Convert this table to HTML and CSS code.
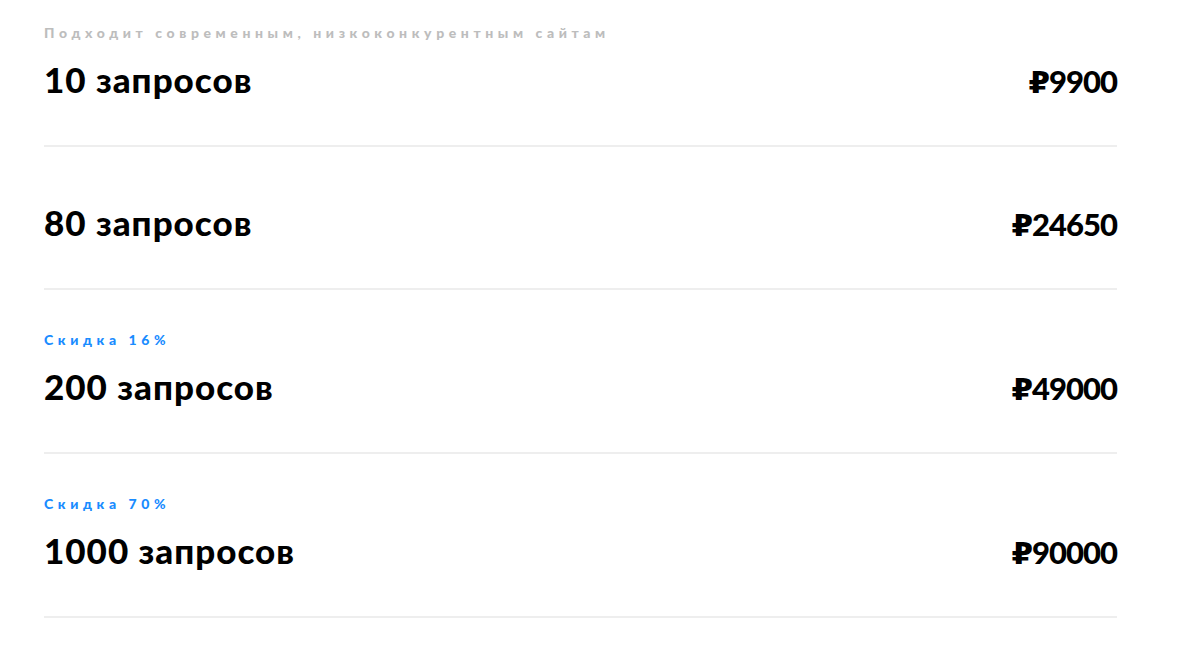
FILE: index.html
```html
<!DOCTYPE html>
<html lang="ru">
<head>
  <meta charset="UTF-8" />
  <meta name="viewport" content="width=device-width, initial-scale=1.0" />
  <title>Тарифы</title>
  <link rel="stylesheet" href="styles.css">
</head>
<body>
  <div class="prices">
    <div class="row first">
      <div class="note">Подходит современным, низкоконкурентным сайтам</div>
      <div class="line">
        <div class="title">10 запросов</div>
        <div class="price">₽9900</div>
      </div>
    </div>
    <div class="row plain">
      <div class="line">
        <div class="title">80 запросов</div>
        <div class="price">₽24650</div>
      </div>
    </div>
    <div class="row">
      <div class="note sale">Скидка 16%</div>
      <div class="line">
        <div class="title">200 запросов</div>
        <div class="price">₽49000</div>
      </div>
    </div>
    <div class="row">
      <div class="note sale">Скидка 70%</div>
      <div class="line">
        <div class="title">1000 запросов</div>
        <div class="price">₽90000</div>
      </div>
    </div>
  </div>
</body>
</html>
```

FILE: styles.css
```css
body {
  margin: 0;
  padding: 0;
  background: #fff;
  color: #000;
  font-family: Lato, "DejaVu Sans", sans-serif;
}
.prices {
  width: 1073px;
  margin-left: 44px;
}
.row {
  padding: 42px 0 46px;
  border-bottom: 2px solid #eeeeee;
}
.row.first {
  padding-top: 25px;
}
.row.plain {
  padding-top: 57px;
}
.note {
  font-size: 14px;
  line-height: 16px;
  font-weight: 900;
  letter-spacing: 4.6px;
  color: #bdbdbd;
  margin-bottom: 20px;
}
.note.sale {
  color: #1a8cff;
}
.line {
  display: flex;
  justify-content: space-between;
  align-items: baseline;
}
.title {
  font-size: 35px;
  line-height: 36px;
  font-weight: 900;
  letter-spacing: 1px;
}
.price {
  font-size: 31px;
  line-height: 36px;
  font-weight: 900;
  letter-spacing: -1px;
}
```
